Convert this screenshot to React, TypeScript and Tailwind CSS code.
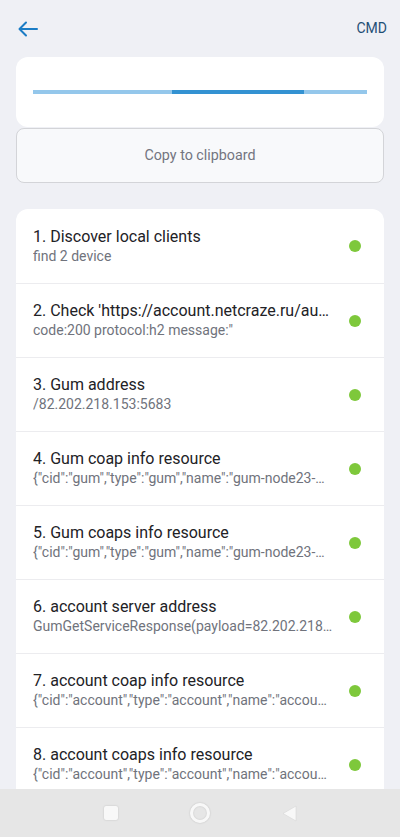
const steps = [
  { title: '1. Discover local clients', detail: 'find 2 device' },
  { title: "2. Check 'https://account.netcraze.ru/auth/health'", detail: 'code:200 protocol:h2 message:"' },
  { title: '3. Gum address', detail: '/82.202.218.153:5683' },
  { title: '4. Gum coap info resource', detail: '{"cid":"gum","type":"gum","name":"gum-node23-msk","version":"1.0"}' },
  { title: '5. Gum coaps info resource', detail: '{"cid":"gum","type":"gum","name":"gum-node23-msk","version":"1.0"}' },
  { title: '6. account server address', detail: 'GumGetServiceResponse(payload=82.202.218.153:5684)' },
  { title: '7. account coap info resource', detail: '{"cid":"account","type":"account","name":"account-node"}' },
  { title: '8. account coaps info resource', detail: '{"cid":"account","type":"account","name":"account-node"}' },
]

export default function App() {
  return (
    <div
      className="flex h-[837px] w-[400px] flex-col overflow-hidden bg-[#eff0f5]"
      style={{ fontFamily: 'Roboto, "Noto Sans", sans-serif' }}
    >
      <div className="flex-1 overflow-hidden">
        <header className="flex h-[57px] items-center justify-between pl-[18px] pr-[13px]">
          <svg width="20" height="16" viewBox="0 0 20 16" fill="none" stroke="#1b7cc5" strokeWidth="2" strokeLinecap="round" strokeLinejoin="round">
            <path d="M19 8H2" />
            <path d="M8 1.5L1.5 8L8 14.5" />
          </svg>
          <span className="text-[14px] text-[#1f4f75]">CMD</span>
        </header>

        <div className="mx-4 flex h-[70px] items-center rounded-xl bg-white px-[17px]">
          <div className="flex h-[4px] w-full bg-[#94c7eb]">
            <div className="w-[139px]" />
            <div className="w-[132px] bg-[#3392d2]" />
          </div>
        </div>

        <button className="mx-4 mt-px flex h-[55px] w-[368px] items-center justify-center rounded-lg border border-[#d3d4d8] bg-[#f8f9fb] text-[14.3px] text-[#737580]">
          Copy to clipboard
        </button>

        <ul className="mx-4 mt-[26px] rounded-t-xl bg-white">
          {steps.map((step, i) => (
            <li
              key={step.title}
              className={`flex h-[74px] items-center pl-[17px] pr-[23px] ${i > 0 ? 'border-t border-[#ececef]' : ''}`}
            >
              <div className="min-w-0 flex-1 -translate-y-px">
                <p className="truncate text-[16px] leading-[21px] text-[#222226]">{step.title}</p>
                <p className="truncate text-[14px] leading-[18px] text-[#70737c]">{step.detail}</p>
              </div>
              <span className="ml-4 h-[12px] w-[12px] shrink-0 rounded-full bg-[#7ec83b]" />
            </li>
          ))}
        </ul>
      </div>

      <nav className="flex h-[48px] shrink-0 items-center justify-center gap-[72px] bg-[#e6e6e6]">
        <span className="h-[14px] w-[14px] rounded-[2px] bg-[#f8f8f8] shadow-[0_0_2px_rgba(0,0,0,0.18)]" />
        <span className="h-[20px] w-[20px] rounded-full border-[3px] border-[#f8f8f8] shadow-[0_0_2px_rgba(0,0,0,0.2),inset_0_0_2px_rgba(0,0,0,0.15)]" />
        <svg width="15" height="17" viewBox="0 0 15 17">
          <path d="M14 1L1 8.5L14 16Z" fill="#f8f8f8" stroke="#d6d6d6" strokeWidth="0.6" strokeLinejoin="round" />
        </svg>
      </nav>
    </div>
  )
}
